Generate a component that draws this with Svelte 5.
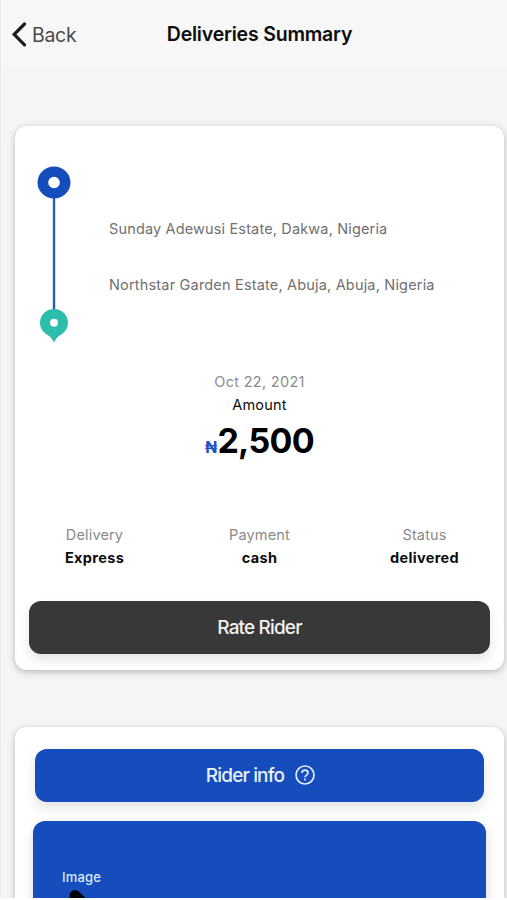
<script lang="ts">
	const delivery = {
		pickup: 'Sunday Adewusi Estate, Dakwa, Nigeria',
		dropoff: 'Northstar Garden Estate, Abuja, Abuja, Nigeria',
		date: 'Oct 22, 2021',
		amount: 2500
	};

	const details = [
		{ label: 'Delivery', value: 'Express' },
		{ label: 'Payment', value: 'cash' },
		{ label: 'Status', value: 'delivered' }
	];
</script>

<div class="screen">
	<header class="navbar">
		<button class="back">
			<svg width="15" height="25" viewBox="0 0 15 25" fill="none">
				<path d="M12.5 2 L2.2 12.4 L12.5 22.8" stroke="#1c1c1c" stroke-width="3.2" stroke-linecap="round" />
			</svg>
			<span>Back</span>
		</button>
		<h1>Deliveries Summary</h1>
	</header>

	<section class="card summary">
		<div class="route">
			<svg class="track" width="34" height="178" viewBox="0 0 34 178">
				<path d="M17 30V150" stroke="#2a5cc0" stroke-width="2.4" />
				<ellipse cx="17" cy="16.5" rx="16.5" ry="16" fill="#154dbc" />
				<circle cx="17" cy="16.5" r="5.8" fill="#fff" />
				<path d="M17 143c7.8 0 14 6.1 14 13.8 0 5.300-2.800 9.600-7.200 12-3.300 1.800-5.200 4.400-6.800 8-1.600-3.600-3.500-6.200-6.800-8-4.400-2.400-7.200-6.700-7.200-12C3 149.100 9.200 143 17 143z" fill="#2dbdab" />
				<circle cx="17" cy="156.800" r="4" fill="#fff" />
			</svg>
			<div class="stops">
				<p class="pickup">{delivery.pickup}</p>
				<p class="dropoff">{delivery.dropoff}</p>
			</div>
		</div>

		<div class="payment">
			<p class="date">{delivery.date}</p>
			<p class="caption">Amount</p>
			<p class="amount"><span class="naira">₦</span>{delivery.amount.toLocaleString('en-US')}</p>
		</div>

		<div class="details">
			{#each details as item}
				<div class="detail">
					<span class="label">{item.label}</span>
					<strong>{item.value}</strong>
				</div>
			{/each}
		</div>

		<button class="btn rate">Rate Rider</button>
	</section>

	<section class="card rider">
		<button class="btn info">
			<span>Rider info</span>
			<svg width="20" height="20" viewBox="0 0 20 20" fill="none" stroke="#e4edff" stroke-width="1.7">
				<circle cx="10" cy="10" r="9" />
				<path d="M7 8c0-1.700 1.300-2.900 3-2.900s3 1.100 3 2.700c0 2.200-3 2.300-3 4.400" />
				<path d="M10 13.500v1.900" />
			</svg>
		</button>
		<div class="profile">
			<span>Image</span>
			<svg width="20" height="40" viewBox="0 0 20 40">
				<path d="M6 5.500 L18 17" stroke="#000" stroke-width="11" stroke-linecap="round" />
			</svg>
		</div>
	</section>
</div>

<style>
	:global(body) {
		margin: 0;
		background: #fff;
		overflow: hidden;
	}

	.screen {
		box-sizing: border-box;
		height: 898px;
		overflow: hidden;
		background: #f5f5f5;
		border-left: 1px solid #ececec;
		font-family: Inter, 'Liberation Sans', sans-serif;
		color: #0c0c0c;
	}

	p,
	h1 {
		margin: 0;
	}

	button {
		border: none;
		padding: 0;
		font-family: inherit;
		cursor: pointer;
	}

	.navbar {
		display: grid;
		grid-template-columns: 1fr auto 1fr;
		align-items: center;
		height: 68px;
		padding: 0 0 0 11px;
		margin-bottom: 58px;
		background: #f7f7f7;
	}

	.back {
		display: flex;
		align-items: center;
		gap: 5px;
		background: none;
		font-size: 19.500px;
		color: #4a4a4a;
		letter-spacing: -0.3px;
	}

	.back span {
		padding-top: 2px;
	}

	h1 {
		font-size: 19.500px;
		font-weight: 600;
		letter-spacing: -0.2px;
	}

	.card {
		box-sizing: border-box;
		margin: 0 3px 57px 14px;
		background: #fff;
		border-radius: 12px;
		box-shadow: 0 2px 7px rgba(0, 0, 0, 0.25);
	}

	.summary {
		height: 544px;
		padding: 40px 14px 0;
	}

	.route {
		display: flex;
		padding-left: 8px;
		height: 204px;
	}

	.stops {
		padding: 53px 0 0 38px;
		font-size: 14.500px;
		line-height: 20px;
		color: #707070;
		letter-spacing: 0.15px;
		white-space: nowrap;
	}

	.dropoff {
		margin-top: 36px;
		letter-spacing: 0.18px;
	}

	.payment {
		text-align: center;
		font-size: 14.500px;
		line-height: 22px;
		height: 154px;
	}

	.date {
		color: #8b8b8b;
		letter-spacing: 0.3px;
		padding-top: 1px;
	}

	.caption {
		padding-top: 1px;
		letter-spacing: 0.2px;
	}

	.amount {
		font-size: 34px;
		font-weight: 700;
		line-height: 50px;
		letter-spacing: -0.7px;
		color: #000;
	}

	.naira {
		margin-right: 1px;
		font-size: 16px;
		color: #2450c8;
	}

	.details {
		display: grid;
		grid-template-columns: repeat(3, 1fr);
		margin: 0 -17px;
		height: 77px;
		text-align: center;
		font-size: 14.500px;
		line-height: 22px;
	}

	.detail {
		display: flex;
		flex-direction: column;
	}

	.detail strong {
		padding-top: 1px;
		letter-spacing: 0.35px;
	}

	.label {
		color: #8b8b8b;
		letter-spacing: 0.15px;
	}

	.btn {
		display: flex;
		align-items: center;
		justify-content: center;
		width: 100%;
		height: 53px;
		border-radius: 12px;
		font-size: 19px;
		font-weight: 500;
		letter-spacing: -0.85px;
		color: #f2f2f2;
		box-shadow: 0 6px 12px rgba(0, 0, 0, 0.11);
	}

	.rate {
		background: #383838;
	}

	.rider {
		height: 400px;
		padding: 22px 18px 0;
	}

	.info {
		gap: 11px;
		width: 449px;
		margin: 0 2px 19px;
		padding-left: 2px;
		background: #154dbc;
		color: #e8f0ff;
	}

	.info svg {
		margin-bottom: 1px;
	}

	.profile {
		display: flex;
		flex-direction: column;
		height: 300px;
		box-sizing: border-box;
		padding: 46px 29px;
		border-radius: 12px;
		background: #154dbc;
		color: #dce8ff;
		font-size: 13px;
		font-weight: 500;
		line-height: 20px;
		letter-spacing: 0.2px;
		box-shadow: 0 5px 12px rgba(0, 0, 0, 0.15);
	}

	.profile svg {
		margin: 3px 0 0 7px;
	}
</style>
